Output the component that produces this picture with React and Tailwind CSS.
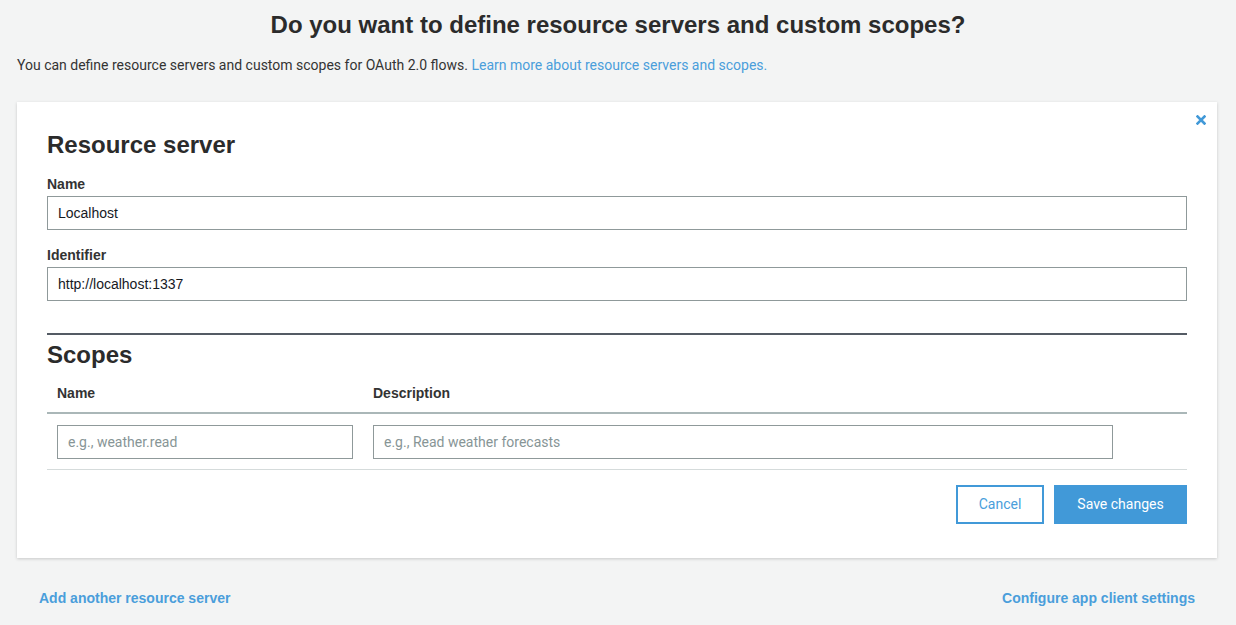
import React from "react";

const blue = "#4199d8";

const Field = ({ label, value, className }) => (
  <div className={className}>
    <div className="text-[14px] leading-[20px] font-bold text-[#333]">{label}</div>
    <input
      type="text"
      defaultValue={value}
      className="mt-[2px] w-full h-[34px] border border-[#8f999a] px-[10px] text-[14px] text-[#16191f] bg-white outline-none"
      style={{ fontFamily: "'Liberation Sans', Arial, sans-serif" }}
    />
  </div>
);

export default function App() {
  return (
    <div
      className="min-h-screen bg-[#f3f4f4] pt-[10px] text-[#333]"
      style={{ fontFamily: "'Liberation Sans', Arial, sans-serif" }}
    >
      <h1 className="text-center text-[24px] leading-[30px] font-bold text-[#2b2b2b]">
        Do you want to define resource servers and custom scopes?
      </h1>
      <p
        className="mt-[15px] px-[17px] text-[14px] leading-[20px] text-[#333]"
        style={{ fontFamily: "Roboto, 'Liberation Sans', sans-serif" }}
      >
        You can define resource servers and custom scopes for OAuth 2.0 flows.{" "}
        <a href="#" className="text-[#4a9edb]">
          Learn more about resource servers and scopes.
        </a>
      </p>

      <div className="relative ml-[17px] mr-[19px] mt-[27px] bg-white px-[30px] pt-[28px] pb-[34px] shadow-[0_1px_3px_rgba(0,0,0,0.18)]">
        <button className="absolute top-[13px] right-[11px] w-[10px] h-[10px]">
          <svg viewBox="0 0 10 10" width="10" height="10">
            <path d="M1.5 1.5 L8.5 8.5 M8.5 1.5 L1.5 8.5" stroke={blue} strokeWidth="2.6" strokeLinecap="square" />
          </svg>
        </button>

        <h2 className="text-[24px] leading-[30px] font-bold text-[#2b2b2b]">Resource server</h2>
        <Field className="mt-[14px]" label="Name" value="Localhost" />
        <Field className="mt-[15px]" label="Identifier" value="http://localhost:1337" />

        <div className="mt-[32px] h-[2px] bg-[#545b64]" />
        <h2 className="mt-[5px] text-[24px] leading-[30px] font-bold text-[#2b2b2b]">Scopes</h2>

        <div className="flex h-[44px] items-center border-b-2 border-[#aab7b8] text-[14px] font-bold text-[#333]">
          <div className="w-[316px] px-[10px] pt-[5px]">Name</div>
          <div className="flex-1 px-[10px] pt-[5px]">Description</div>
        </div>
        <div
          className="flex pt-[11px] pb-[10px] border-b border-[#d5dbdb]"
          style={{ fontFamily: "Roboto, 'Liberation Sans', sans-serif" }}
        >
          <div className="w-[316px] px-[10px]">
            <input
              type="text"
              placeholder="e.g., weather.read"
              className="w-full h-[34px] border border-[#8f999a] px-[10px] text-[14px] placeholder:text-[#879596] outline-none"
            />
          </div>
          <div className="w-[760px] px-[10px]">
            <input
              type="text"
              placeholder="e.g., Read weather forecasts"
              className="w-full h-[34px] border border-[#8f999a] px-[10px] text-[14px] placeholder:text-[#879596] outline-none"
            />
          </div>
        </div>

        <div
          className="mt-[15px] flex justify-end gap-[10px] text-[14px]"
          style={{ fontFamily: "Roboto, 'Liberation Sans', sans-serif" }}
        >
          <button className="w-[88px] h-[39px] border-2 border-[#4199d8] text-[#4a9edb] bg-white">
            Cancel
          </button>
          <button className="w-[133px] h-[39px] bg-[#4199d8] text-white">Save changes</button>
        </div>
      </div>

      <div className="mt-[30px] flex justify-between pl-[39px] pr-[41px] text-[14px] leading-[20px] font-bold">
        <a href="#" className="text-[#4a9edb]">Add another resource server</a>
        <a href="#" className="text-[#4a9edb]">Configure app client settings</a>
      </div>
    </div>
  );
}
